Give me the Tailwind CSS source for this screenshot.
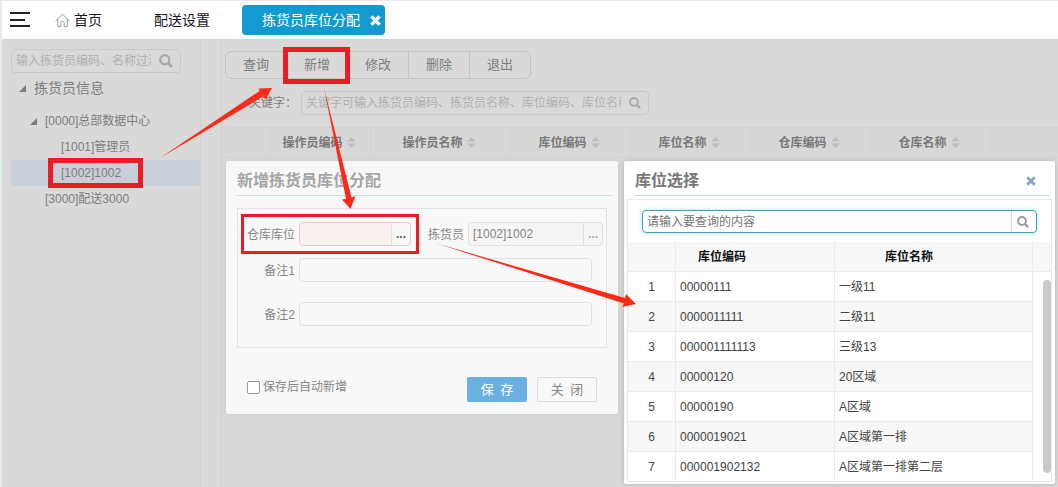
<!DOCTYPE html>
<html lang="zh-CN">
<head>
<meta charset="utf-8">
<meta name="viewport" content="width=device-width, initial-scale=1">
<title>拣货员库位分配</title>
<script src="https://cdn.jsdelivr.net/npm/@tailwindcss/browser@4"></script>
</head>
<body class="relative flex h-screen flex-col overflow-hidden border-t border-l-2 border-[#e6eded] bg-[#d9d9d9] font-['Liberation_Sans','Noto_Sans_CJK_SC',sans-serif] text-xs text-[#7d7d7d]">

<svg class="hidden" aria-hidden="true">
  <symbol id="search" viewBox="0 0 14 14"><circle cx="5.8" cy="5.8" r="4.6" fill="none" stroke="currentColor" stroke-width="2.2"/><path d="M9 9l4 4" stroke="currentColor" stroke-width="2.600" fill="none"/></symbol>
  <symbol id="sort" viewBox="0 0 9 11"><path d="M4.500 0L9 4.600H0zM4.500 11L0 6.400H9z" fill="currentColor"/></symbol>
  <symbol id="cross" viewBox="0 0 10 10"><path d="M1.300 1.300l7.400 7.400M8.700 1.300l-7.400 7.400" stroke="currentColor" stroke-width="3" fill="none"/></symbol>
  <symbol id="caret" viewBox="0 0 7 7"><path d="M7 0v7H0z" fill="currentColor"/></symbol>
</svg>

<header class="flex h-[38px] shrink-0 items-center bg-white text-sm text-[#1c1424]">
  <button class="ml-2 flex h-4 w-5 flex-col justify-between pb-px" aria-label="菜单">
    <span class="h-0.5 w-5 bg-[#222]"></span><span class="h-0.5 w-[15px] bg-[#222]"></span><span class="h-0.5 w-5 bg-[#222]"></span>
  </button>
  <a href="#" class="ml-[25px] flex items-center gap-1">
    <svg class="size-[15px] text-[#999]" viewBox="0 0 15 15" fill="none" stroke="currentColor"><path d="M.8 7.800L7.500 1.200l6.700 6.600M2.700 6.500v7.200h3.100V9.500q0-1.200 1.700-1.200t1.700 1.200v4.200h3.100V6.500" stroke-linejoin="round" stroke-linecap="round"/></svg>
    首页
  </a>
  <a href="#" class="ml-13">配送设置</a>
  <div class="ml-8 flex h-[30px] items-center rounded bg-[#139bd1] pr-[3px] pl-5 text-white">
    <a href="#">拣货员库位分配</a>
    <button class="ml-2.5 flex w-3 items-center" aria-label="关闭标签"><svg class="size-[11px]"><use href="#cross"/></svg></button>
  </div>
</header>

<div class="flex min-h-0 flex-1 border-t border-[#d4d4d4]">
  <aside class="w-[199px] shrink-0 border-r border-[#cfcfcf] pt-[9px] pl-[9px]">
    <div class="mr-[19px] flex h-6 items-center rounded border border-[#c8c8c8] pr-[7px] pl-1">
      <input class="min-w-0 flex-1 bg-transparent outline-none placeholder:text-[#b0b0b0]" aria-label="过滤" placeholder="输入拣货员编码、名称过滤">
      <svg class="ml-2 size-3.5 text-[#a9a9a9]"><use href="#search"/></svg>
    </div>
    <ul class="leading-[26px]">
      <li>
        <div class="flex h-[35px] items-start gap-2 pt-0.5 pl-2 text-sm leading-[26px]"><svg class="mt-2.5 size-[7px]"><use href="#caret"/></svg>拣货员信息</div>
        <ul>
          <li>
            <div class="flex items-center gap-2 pl-[19px]"><svg class="size-[7px]"><use href="#caret"/></svg>[0000]总部数据中心</div>
            <ul>
              <li class="pl-[50px]">[1001]管理员</li>
              <li class="bg-[#c8cfd9] pl-[50px]">[1002]1002</li>
            </ul>
          </li>
          <li class="pl-[34px]">[3000]配送3000</li>
        </ul>
      </li>
    </ul>
  </aside>

  <main class="ml-5 flex min-w-0 flex-1 flex-col border-l border-[#cfcfcf] pt-[11px]">
    <div class="ml-[3px] flex h-7 w-[306px] divide-x divide-[#c2c2c2] rounded-md border border-[#c2c2c2] text-[13px]">
      <button class="flex-1">查询</button><button class="flex-1">新增</button><button class="flex-1">修改</button><button class="flex-1">删除</button><button class="flex-1">退出</button>
    </div>
    <div class="mt-3 ml-[27px] flex items-center">
      <label for="kw" class="w-[52px] shrink-0">关键字：</label>
      <div class="flex h-6 w-[348px] items-center rounded border border-[#c8c8c8] pr-[7px] pl-1">
        <input id="kw" class="min-w-0 flex-1 bg-transparent outline-none placeholder:text-[#b0b0b0]" placeholder="关键字可输入拣货员编码、拣货员名称、库位编码、库位名称">
        <svg class="ml-2 size-3 text-[#a9a9a9]"><use href="#search"/></svg>
      </div>
    </div>
    <table class="mt-3 w-full table-fixed border-collapse">
      <colgroup><col class="w-[48px]"><col class="w-[100px]"><col class="w-[140px]"><col class="w-[120px]"><col class="w-[120px]"><col class="w-[120px]"><col class="w-[120px]"><col></colgroup>
      <thead>
        <tr class="h-[30px] divide-x divide-[#d0d1d5] border-y border-[#d0d1d5] bg-[#d7d7d7] text-[#777] [&_span]:pr-0.5">
          <th></th>
          <th class="whitespace-nowrap"><span class="flex items-center justify-center gap-1">操作员编码<svg class="h-[11px] w-[9px] text-[#bdbdbd]"><use href="#sort"/></svg></span></th>
          <th><span class="flex items-center justify-center gap-1">操作员名称<svg class="h-[11px] w-[9px] text-[#bdbdbd]"><use href="#sort"/></svg></span></th>
          <th><span class="flex items-center justify-center gap-1">库位编码<svg class="h-[11px] w-[9px] text-[#bdbdbd]"><use href="#sort"/></svg></span></th>
          <th><span class="flex items-center justify-center gap-1">库位名称<svg class="h-[11px] w-[9px] text-[#bdbdbd]"><use href="#sort"/></svg></span></th>
          <th><span class="flex items-center justify-center gap-1">仓库编码<svg class="h-[11px] w-[9px] text-[#bdbdbd]"><use href="#sort"/></svg></span></th>
          <th><span class="flex items-center justify-center gap-1">仓库名称<svg class="h-[11px] w-[9px] text-[#bdbdbd]"><use href="#sort"/></svg></span></th>
          <th></th>
        </tr>
      </thead>
    </table>
  </main>
</div>

<!-- Dialogs -->
<div class="absolute inset-x-0 top-40 flex items-start gap-1.5 pr-[3px] pl-56">
  <section class="w-[392px] shrink-0 rounded-xs bg-[#f8f8f8] px-[11px] pb-3 text-[#868686] shadow-[0_0_4px_rgba(0,0,0,0.08)]" aria-labelledby="t1">
    <h2 id="t1" class="-mr-1.5 h-[35px] border-b border-[#cfe1ec] pt-2 text-base font-bold text-[#a6a6a6]">新增拣货员库位分配</h2>
    <form>
      <div class="mt-3 h-[140px] border border-[#e0e2e6] pt-[13px]">
        <div class="flex items-center">
          <label for="loc" class="w-[57px] pt-0.5 text-right">仓库库位</label>
          <div class="ml-1 flex h-6 w-[112px] overflow-hidden rounded border border-[#ecc8c6]">
            <input id="loc" class="min-w-0 flex-1 bg-[#f9f0f0] px-1 outline-none"><button type="button" class="w-[19px] border-l border-[#e0e0e0] font-bold text-[#555]">...</button>
          </div>
          <label for="picker" class="w-[53px] pt-0.5 text-right">拣货员</label>
          <div class="ml-1 flex h-6 w-[135px] overflow-hidden rounded border border-[#e0e0e0] bg-[#f5f5f5]">
            <input id="picker" value="[1002]1002" class="min-w-0 flex-1 px-1 outline-none"><button type="button" class="w-[19px] border-l border-[#e0e0e0] font-bold text-[#aaa]">...</button>
          </div>
        </div>
        <div class="mt-3 flex items-center">
          <label for="n1" class="w-[57px] pt-0.5 text-right">备注1</label><input id="n1" class="ml-1 h-6 w-[293px] rounded border border-[#dfdfe1] px-1">
        </div>
        <div class="mt-5 flex items-center">
          <label for="n2" class="w-[57px] pt-0.5 text-right">备注2</label><input id="n2" class="ml-1 h-6 w-[293px] rounded border border-[#dfdfe1] px-1">
        </div>
      </div>
      <div class="mt-[29px] flex items-start gap-2.5 pr-2.5 pl-2.5">
        <label class="mr-auto flex items-center gap-[3px] pt-0.5"><input type="checkbox" class="size-[13px] appearance-none rounded-xs border border-[#999] bg-white">保存后自动新增</label>
        <button type="button" class="h-[25px] w-[60px] rounded-xs bg-[#6ab0e3] text-[13px] text-white">保&ensp;存</button>
        <button type="button" class="h-[25px] w-[60px] rounded-xs border border-[#dcdcdc] text-[13px]">关&ensp;闭</button>
      </div>
    </form>
  </section>

  <section class="min-w-0 flex-1 rounded-xs bg-white px-[3px] pb-0.5 text-[#444] shadow-[0_0_5px_rgba(0,0,0,0.18)]" aria-labelledby="t2">
    <div class="mr-[3px] ml-2 flex h-[35px] items-center border-b border-[#bfdde2] pt-1.5 pr-[13px]">
      <h2 id="t2" class="flex-1 text-base font-bold text-[#777]">库位选择</h2>
      <button aria-label="关闭"><svg class="size-2.5 text-[#86a9c6]"><use href="#cross"/></svg></button>
    </div>
    <div class="relative mt-[3px] border border-[#e8eaee]">
      <div class="mx-3.5 mt-2.5 mb-[9px] flex h-[23px] items-center rounded border border-[#4a9db5] shadow-[0_0_4px_rgba(80,220,220,0.6)]">
        <input class="min-w-0 flex-1 px-1 outline-none placeholder:text-[#757575]" aria-label="查询内容" placeholder="请输入要查询的内容">
        <button class="flex h-full w-[25px] items-center border-l border-[#d5d5d5] pl-[5px] text-[#999]" aria-label="查询"><svg class="size-3"><use href="#search"/></svg></button>
      </div>
      <table class="w-full table-fixed border-separate border-spacing-0">
        <colgroup><col class="w-[48px]"><col class="w-[159px]"><col><col class="w-[18px]"></colgroup>
        <thead>
          <tr class="h-[30px] bg-[#f7f7f7] text-left text-[#111]">
            <th class="border-r border-b border-[#e8eaee]"></th><th class="border-r border-b border-[#e8eaee] pl-[22px]">库位编码</th><th class="border-r border-b border-[#e8eaee] pl-[50px]">库位名称</th><th class="border-b border-[#e8eaee]"></th>
          </tr>
        </thead>
        <tbody class="[&_td]:h-[30px] [&_td]:border-b [&_td]:border-[#e8eaee] [&_td:not(:first-child)]:pl-1 [&_td:not(:last-child)]:border-r [&_td:last-child]:border-b-white [&_td:last-child]:bg-white [&_td:first-child]:text-center [&_tr:nth-child(even)]:bg-[#f7f7f7] [&_tr:last-child_td]:border-b-0 [&_tr:last-child_td]:h-[29px]">
          <tr><td>1</td><td>00000111</td><td>一级11</td><td></td></tr>
          <tr><td>2</td><td>0000011111</td><td>二级11</td><td></td></tr>
          <tr><td>3</td><td>000001111113</td><td>三级13</td><td></td></tr>
          <tr><td>4</td><td>00000120</td><td>20区域</td><td></td></tr>
          <tr><td>5</td><td>00000190</td><td>A区域</td><td></td></tr>
          <tr><td>6</td><td>0000019021</td><td>A区域第一排</td><td></td></tr>
          <tr><td>7</td><td>000001902132</td><td>A区域第一排第二层</td><td></td></tr>
        </tbody>
      </table>
      <div class="absolute right-0 bottom-2 h-[193px] w-2 rounded-full bg-[#c9c9c9]"></div>
    </div>
  </section>
</div>

<!-- Step highlights and arrows -->
<svg class="pointer-events-none absolute -top-px -left-0.5 h-[487px] w-[1058px]" viewBox="0 0 1058 487" aria-hidden="true">
  <g fill="none" stroke="#ea1c24">
    <rect x="50.500" y="160.500" width="90" height="25" stroke-width="5"/>
    <rect x="285.500" y="49.500" width="62" height="32" stroke-width="5"/>
    <rect x="242.500" y="215.500" width="175" height="37" stroke-width="3"/>
  </g>
  <g fill="#fb2a17">
    <path d="M160 158L259.500 91L258.500 88.500L272 88L265.500 99.500L263 96.500Z"/>
    <path d="M324 88L351.500 197.500L355.500 196L350.500 209L342 199.500L346 199Z"/>
    <path d="M435 243L625 298L626 294L636 304L622 307L624 303.500Z"/>
  </g>
  <path d="M527 0h5v1h-5zM0 242h1v5H0zM0 0h3v1H0z" fill="#222"/>
</svg>
</body>
</html>
